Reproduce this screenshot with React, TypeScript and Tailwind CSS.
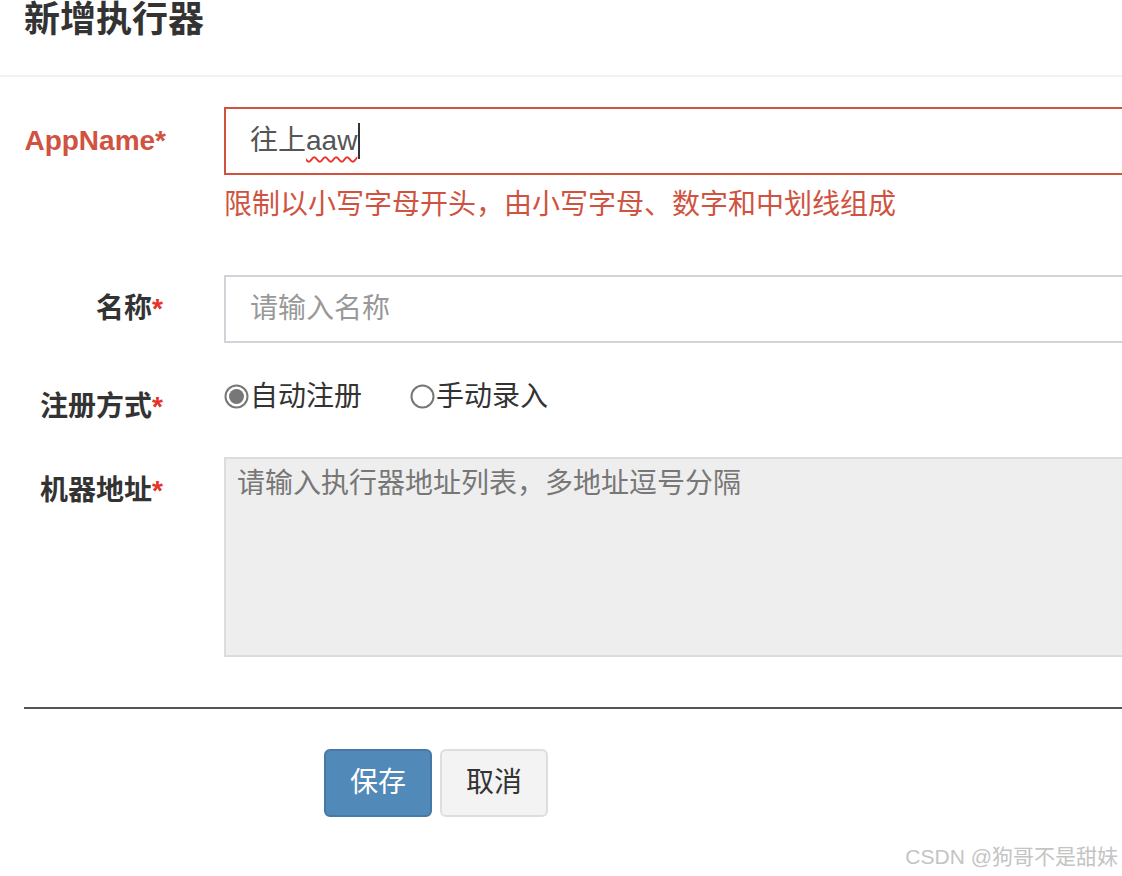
export default function App() {
  return (
    <div
      className="w-[1122px] h-[876px] bg-white overflow-hidden relative text-[#333]"
      style={{ fontFamily: '"Liberation Sans", "Noto Sans CJK SC", sans-serif' }}
    >
      {/* header */}
      <div className="h-[77px] px-[24px] border-b-2 border-[#f2f2f2]">
        <h4 className="text-[36px] leading-[40px] font-bold text-[#333]">新增执行器</h4>
      </div>

      <form className="pt-[30px]">
        {/* AppName */}
        <div className="flex">
          <label className="w-[166px] shrink-0 text-right text-[28px] leading-[68px] font-bold text-[#cf5340]">
            AppName*
          </label>
          <div className="ml-[58px] w-[1000px] shrink-0">
            <div className="h-[68px] border-2 border-[#cf5340] pl-[24px] flex items-center text-[28px] text-[#555]">
              <span>往上</span>
              <span className="underline decoration-wavy decoration-[#e8352b] decoration-[2px] underline-offset-[6px]">aaw</span>
              <span className="w-[2px] h-[36px] bg-[#333] ml-[1px]" />
            </div>
            <p className="mt-[10px] text-[28px] leading-[40px] text-[#cf5340]">
              限制以小写字母开头，由小写字母、数字和中划线组成
            </p>
          </div>
        </div>

        {/* 名称 */}
        <div className="flex mt-[50px]">
          <label className="w-[166px] shrink-0 pr-[3px] text-right text-[28px] leading-[68px] font-bold">
            名称<span className="text-[#e4342a]">*</span>
          </label>
          <div className="ml-[58px] w-[1000px] shrink-0 h-[68px] border-2 border-[#d0d3d8] pl-[24px] flex items-center text-[28px] text-[#999]">
            请输入名称
          </div>
        </div>

        {/* 注册方式 */}
        <div className="flex mt-[34px]">
          <label className="w-[166px] shrink-0 pr-[3px] pt-[10px] text-right text-[28px] leading-[40px] font-bold">
            注册方式<span className="text-[#e4342a]">*</span>
          </label>
          <div className="ml-[58px] flex items-center h-[40px] text-[28px] text-[#333]">
            <span className="flex items-center">
              <svg width="25" height="25" viewBox="0 0 25 25" className="-mt-[2px]">
                <circle cx="12.5" cy="12.5" r="11" fill="white" stroke="#777" strokeWidth="2" />
                <circle cx="12.5" cy="12.5" r="7.5" fill="#777" />
              </svg>
              <span className="ml-[1px]">自动注册</span>
            </span>
            <span className="flex items-center ml-[48px]">
              <svg width="25" height="25" viewBox="0 0 25 25" className="-mt-[2px]">
                <circle cx="12.5" cy="12.5" r="11" fill="white" stroke="#777" strokeWidth="2" />
              </svg>
              <span className="ml-[1px]">手动录入</span>
            </span>
          </div>
        </div>

        {/* 机器地址 */}
        <div className="flex mt-[30px]">
          <label className="w-[166px] shrink-0 pr-[3px] pt-[14px] text-right text-[28px] leading-[40px] font-bold">
            机器地址<span className="text-[#e4342a]">*</span>
          </label>
          <div className="ml-[58px] w-[1000px] shrink-0 h-[200px] border-2 border-[#dcdcdc] bg-[#eeeeee] pl-[11px] pt-[5px] text-[28px] leading-[40px] text-[#777]">
            请输入执行器地址列表，多地址逗号分隔
          </div>
        </div>

        {/* footer */}
        <div className="ml-[24px] mt-[50px] border-t-2 border-[#555]" />
        <div className="flex gap-[8px] pl-[324px] pt-[40px]">
          <button
            type="button"
            className="w-[108px] h-[68px] rounded-[6px] bg-[#5189b8] border-2 border-[#4679a5] text-white text-[28px]"
          >
            保存
          </button>
          <button
            type="button"
            className="w-[108px] h-[68px] rounded-[6px] bg-[#f3f3f3] border-2 border-[#dedede] text-[#333] text-[28px]"
          >
            取消
          </button>
        </div>
      </form>

      <div className="absolute right-[4px] bottom-[7px] text-[21px] leading-[24px] text-[#c4c4c4]">
        CSDN @狗哥不是甜妹
      </div>
    </div>
  )
}
